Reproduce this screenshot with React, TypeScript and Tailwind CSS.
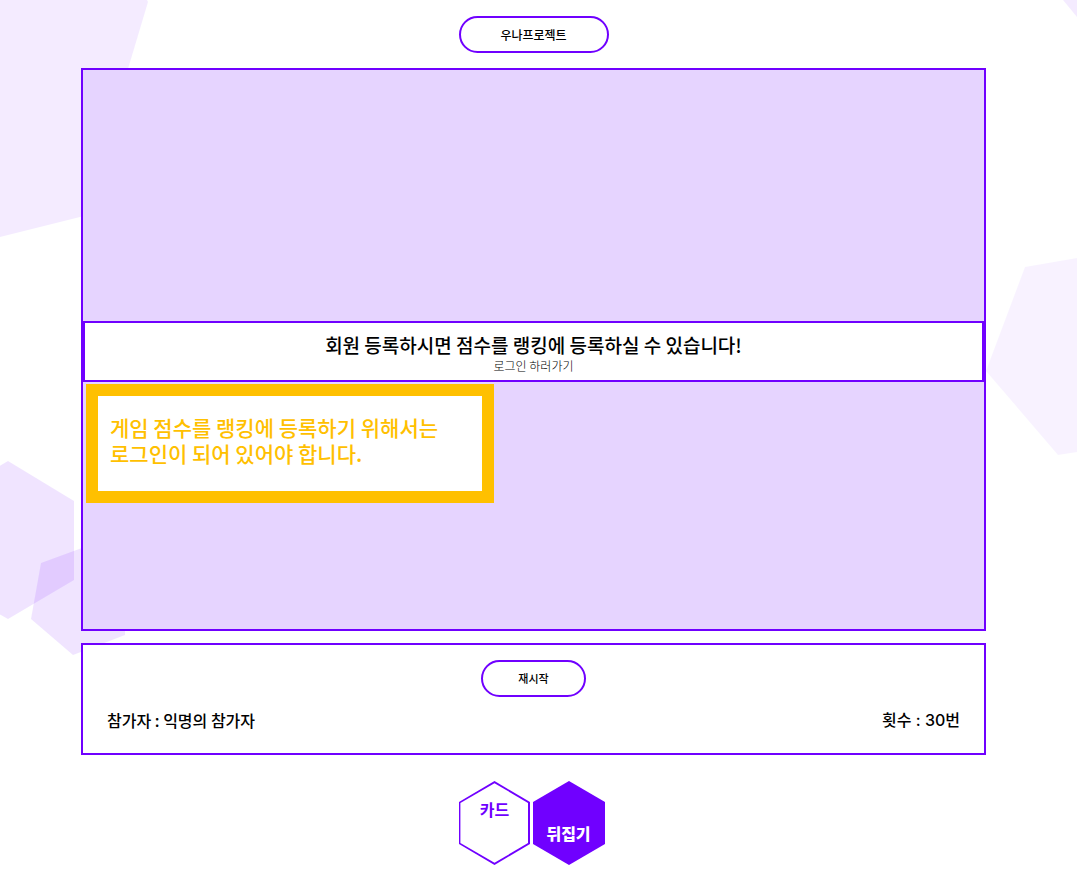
function Backdrop() {
  return (
    <div aria-hidden="true" className="pointer-events-none absolute inset-0 -z-10 flex justify-between overflow-hidden">
      <svg width="160" height="680" viewBox="0 0 160 680" fill="#7000ff">
        <polygon points="0,0 147,0 148,2 84,216 0,237" opacity=".08" />
        <polygon points="8,461 74,501 74,580 8,619 -60,580 -60,501" opacity=".105" />
        <polygon points="41,563 101,541 125,561 125,635 73,655 31,619" opacity=".105" />
      </svg>
      <svg width="100" height="680" viewBox="0 0 100 680" fill="#7000ff">
        <polygon points="86,0 100,0 100,17" opacity=".08" />
        <polygon points="48,267 100,258 100,452 81,455 9,371" opacity=".05" />
      </svg>
    </div>
  );
}

function HexCard({ label, filled = false }: { label: string; filled?: boolean }) {
  return (
    <div className="grid h-[84px] w-[72px]">
      <svg viewBox="0 0 72 84" className="col-start-1 row-start-1 h-full w-full" aria-hidden="true">
        {filled ? (
          <polygon points="36,0 72,21 72,63 36,84 0,63 0,21" fill="#7000ff" />
        ) : (
          <>
            <polygon points="35.5,0 71,21 71,63 35.5,84 0,63 0,21" fill="#7000ff" />
            <polygon points="35.5,2.2 69,22 69,62 35.5,81.8 1.4,62 1.4,22" fill="#fff" />
          </>
        )}
      </svg>
      <span
        className={
          filled
            ? "col-start-1 row-start-1 self-end pb-5 text-center text-base leading-6 font-black text-white"
            : "col-start-1 row-start-1 self-start pt-4 text-center text-base leading-6 font-bold text-[#7000ff]"
        }
      >
        {label}
      </span>
    </div>
  );
}

export default function App() {
  return (
    <div className="relative isolate flex min-h-screen flex-col overflow-hidden bg-white pt-4 pr-[91px] pb-7 pl-[81px] font-['Noto_Sans_CJK_KR',sans-serif] text-black">
      <Backdrop />
      <header className="flex justify-center">
        <button
          type="button"
          className="h-[37px] w-[150px] rounded-full border-2 border-[#7000ff] bg-white text-xs font-medium"
        >
          우나프로젝트
        </button>
      </header>

      <main className="mt-[15px] flex flex-col gap-3">
        <section className="min-h-[563px] border-2 border-[#7000ff] bg-[#e6d4ff] pt-[251px]">
          <div className="border-2 border-[#7000ff] bg-white pt-[9px] pb-[6px] text-center">
            <h1 className="text-[19px] leading-[26px] font-medium">
              회원 등록하시면 점수를 랭킹에 등록하실 수 있습니다!
            </h1>
            <a href="#login" className="block text-xs leading-4 font-light">
              로그인 하러가기
            </a>
          </div>
          <p className="mt-[2px] ml-[3px] min-h-[119px] w-[408px] max-w-full border-12 border-[#ffc000] bg-white px-3 pt-[18px] text-[21px] leading-[26px] font-medium text-[#ffc000]">
            게임 점수를 랭킹에 등록하기 위해서는
            <br />
            로그인이 되어 있어야 합니다.
          </p>
        </section>

        <section className="border-2 border-[#7000ff] bg-white px-6 pt-[15px] pb-[21px]">
          <div className="flex justify-center">
            <button
              type="button"
              className="h-[37px] w-[105px] rounded-full border-2 border-[#7000ff] bg-white text-[11px] font-medium"
            >
              재시작
            </button>
          </div>
          <div className="mt-[11px] flex justify-between text-base leading-6 font-medium">
            <span>참가자 : 익명의 참가자</span>
            <span className="font-['Inter','Noto_Sans_CJK_KR',sans-serif]">횟수 : 30번</span>
          </div>
        </section>
      </main>

      <footer className="mt-[26px] flex justify-center gap-[2px] pr-1">
        <HexCard label="카드" />
        <HexCard label="뒤집기" filled />
      </footer>
    </div>
  );
}
